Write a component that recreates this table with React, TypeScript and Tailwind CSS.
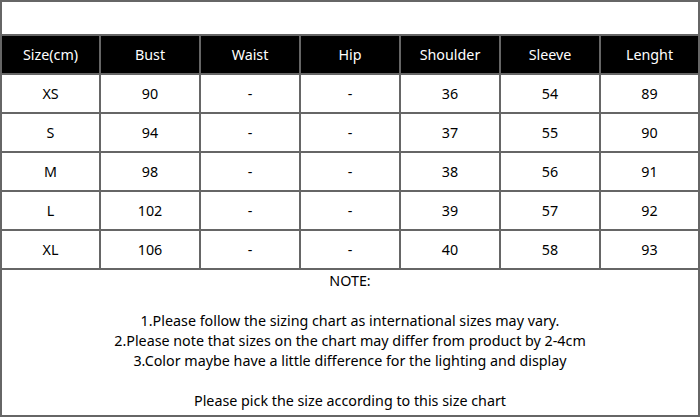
const headers = ["Size(cm)", "Bust", "Waist", "Hip", "Shoulder", "Sleeve", "Lenght"];

const rows = [
  ["XS", "90", "-", "-", "36", "54", "89"],
  ["S", "94", "-", "-", "37", "55", "90"],
  ["M", "98", "-", "-", "38", "56", "91"],
  ["L", "102", "-", "-", "39", "57", "92"],
  ["XL", "106", "-", "-", "40", "58", "93"],
];

export default function App() {
  return (
    <div
      className="w-[700px] h-[417px] bg-white text-[14.3px] text-black border-2 border-[#666] flex flex-col overflow-hidden"
      style={{ fontFamily: '"Noto Sans", sans-serif' }}
    >
      <div className="h-[34px] border-b-2 border-[#666]" />
      <div className="grid grid-cols-[97px_100px_100px_100px_100px_100px_99px] bg-black text-white h-[39px] border-b-2 border-[#666]">
        {headers.map((h, i) => (
          <div
            key={h}
            className={`flex items-center justify-center ${i > 0 ? "border-l-2 border-[#666]" : ""}`}
          >
            {h}
          </div>
        ))}
      </div>
      {rows.map((r) => (
        <div
          key={r[0]}
          className="grid grid-cols-[97px_100px_100px_100px_100px_100px_99px] h-[39px] border-b-2 border-[#666]"
        >
          {r.map((c, i) => (
            <div
              key={i}
              className={`flex items-center justify-center ${i > 0 ? "border-l-2 border-[#666]" : ""}`}
            >
              {c}
            </div>
          ))}
        </div>
      ))}
      <div className="flex-1 flex flex-col items-center pt-[1px] leading-[20px]">
        <div>NOTE:</div>
        <div className="h-[20px]" />
        <div>1.Please follow the sizing chart as international sizes may vary.</div>
        <div>2.Please note that sizes on the chart may differ from product by 2-4cm</div>
        <div>3.Color maybe have a little difference for the lighting and display</div>
        <div className="h-[20px]" />
        <div>Please pick the size according to this size chart</div>
      </div>
    </div>
  );
}
